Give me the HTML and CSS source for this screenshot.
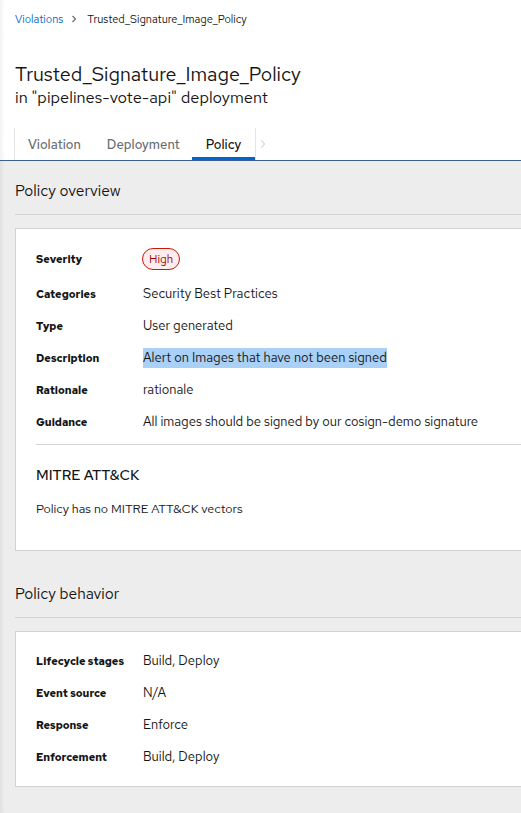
FILE: index.html
```html
<!DOCTYPE html>
<html lang="en">
<head>
<meta charset="utf-8">
<title>Trusted_Signature_Image_Policy</title>
<link rel="stylesheet" href="styles.css">
</head>
<body>
<div class="page">
  <nav class="breadcrumb">
    <a class="crumb-link" href="#">Violations</a>
    <span class="crumb-sep">
      <svg viewBox="0 0 8 10" width="6" height="8"><path d="M2 1 L6 5 L2 9" fill="none" stroke="#6a6e73" stroke-width="1.6"/></svg>
    </span>
    <span class="crumb-current">Trusted_Signature_Image_Policy</span>
  </nav>

  <header class="title-block">
    <h1 class="title">Trusted_Signature_Image_Policy</h1>
    <div class="subtitle">in "pipelines-vote-api" deployment</div>
  </header>

  <div class="tabs">
    <div class="tab-list">
      <div class="tab">Violation</div>
      <div class="tab">Deployment</div>
      <div class="tab tab-active">Policy</div>
      <div class="tab-scroll">
        <svg viewBox="0 0 8 12" width="6" height="10"><path d="M2 1 L6 6 L2 11" fill="none" stroke="#d2d2d2" stroke-width="1.5"/></svg>
      </div>
    </div>
  </div>

  <main class="content">
    <section class="section">
      <h2 class="section-title">Policy overview</h2>
      <div class="card">
        <dl class="desc-list">
          <dt class="row-sev">Severity</dt>
          <dd class="row-sev"><span class="badge">High</span></dd>
          <dt>Categories</dt>
          <dd>Security Best Practices</dd>
          <dt>Type</dt>
          <dd>User generated</dd>
          <dt>Description</dt>
          <dd><span class="selected">Alert on Images that have not been signed</span></dd>
          <dt>Rationale</dt>
          <dd>rationale</dd>
          <dt>Guidance</dt>
          <dd>All images should be signed by our cosign-demo signature</dd>
        </dl>
        <div class="divider"></div>
        <h3 class="sub-title">MITRE ATT&amp;CK</h3>
        <p class="sub-text">Policy has no MITRE ATT&amp;CK vectors</p>
      </div>
    </section>

    <section class="section section-second">
      <h2 class="section-title">Policy behavior</h2>
      <div class="card card-behavior">
        <dl class="desc-list">
          <dt>Lifecycle stages</dt>
          <dd>Build, Deploy</dd>
          <dt>Event source</dt>
          <dd>N/A</dd>
          <dt>Response</dt>
          <dd>Enforce</dd>
          <dt>Enforcement</dt>
          <dd>Build, Deploy</dd>
        </dl>
      </div>
    </section>
  </main>
</div>
</body>
</html>
```

FILE: styles.css
```css
html, body {
  margin: 0;
  padding: 0;
  overflow: hidden;
}
body {
  font-family: "Red Hat Text", Lato, "Liberation Sans", sans-serif;
  color: #151515;
  background: #f0f0f0;
}
.page {
  min-height: 813px;
  background: #ededed;
  box-shadow: inset 5px 0 4px -3px rgba(0,0,0,0.06);
}
.breadcrumb {
  display: flex;
  align-items: center;
  height: 38px;
  padding: 0 15px;
  font-size: 11px;
  background: #fff;
  box-shadow: inset 5px 0 4px -3px rgba(0,0,0,0.06);
}
.crumb-link {
  color: #0066cc;
  text-decoration: none;
}
.crumb-sep {
  display: flex;
  align-items: center;
  margin: 0 10px 0 8px;
}
.crumb-current {
  color: #151515;
}
.title-block {
  background: #fff;
  padding: 24px 15px 20px;
  box-shadow: inset 5px 0 4px -3px rgba(0,0,0,0.06);
}
.title {
  margin: 0;
  font-size: 19.7px;
  font-weight: 400;
  line-height: 24px;
}
.subtitle {
  font-size: 16.4px;
  line-height: 22px;
}
.tabs {
  background: #fff;
  padding-left: 14px;
  border-bottom: 1px solid #3d5f8f;
  box-shadow: inset 5px 0 4px -3px rgba(0,0,0,0.06);
}
.tab-list {
  display: flex;
  height: 32px;
  border-left: 1px solid #e4e4e4;
}
.tab {
  display: flex;
  align-items: center;
  padding: 0 13px;
  font-size: 13px;
  font-weight: 500;
  color: #6a6e73;
}
.tab-active {
  color: #151515;
  box-shadow: inset 0 -3px 0 #0066cc;
  padding: 0 14px;
  margin-left: -1px;
}
.tab-scroll {
  display: flex;
  align-items: center;
  padding-left: 4px;
  border-left: 1px solid #e4e4e4;
}
.content {
  padding-left: 15px;
  margin-right: -40px;
}
.section {
  padding-top: 18px;
}
.section-second {
  padding-top: 31px;
}
.section-title {
  margin: 0;
  font-size: 15.5px;
  font-weight: 400;
  line-height: 24px;
  padding-bottom: 11px;
  border-bottom: 1px solid #d2d2d2;
}
.card {
  margin-top: 13px;
  background: #fff;
  border: 1px solid #d2d2d2;
  padding: 18px 20px 29px;
}
.card-behavior {
  padding-top: 17px;
  padding-bottom: 17px;
}
.desc-list {
  display: grid;
  grid-template-columns: 107px 1fr;
  row-gap: 8px;
  margin: 0;
}
.desc-list dt {
  font-size: 11px;
  font-weight: 700;
  line-height: 24px;
  margin: 0;
}
.desc-list dd {
  font-size: 13px;
  line-height: 24px;
  margin: 0;
}
.row-sev {
  margin-bottom: 3px !important;
  display: flex;
  align-items: center;
}
.badge {
  display: inline-flex;
  align-items: center;
  height: 20px;
  padding: 0 6px;
  border: 1px solid #c9190b;
  border-radius: 11px;
  background: #fdeded;
  color: #a30000;
  font-size: 11.5px;
  margin-left: -1px;
}
.selected {
  background: #a9d1f8;
  padding: 1px 0 2px;
}
.divider {
  height: 1px;
  background: #d2d2d2;
  margin-top: 10px;
}
.sub-title {
  margin: 18px 0 0;
  font-size: 14.5px;
  font-weight: 500;
  line-height: 24px;
}
.sub-text {
  margin: 10px 0 0;
  font-size: 12.5px;
  line-height: 24px;
}
```
